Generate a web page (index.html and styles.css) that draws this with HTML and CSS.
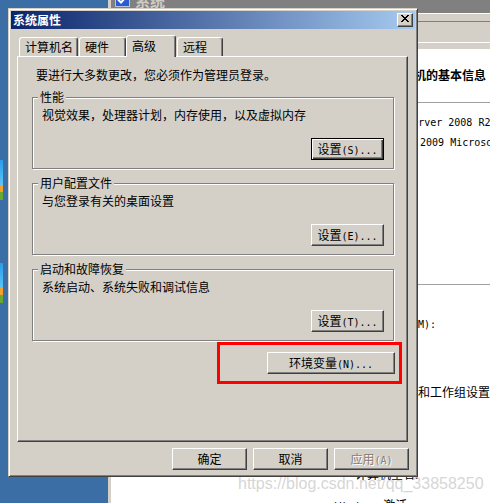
FILE: index.html
```html
<!DOCTYPE html>
<html lang="zh-CN">
<head>
<meta charset="utf-8">
<title>系统属性</title>
<link rel="stylesheet" href="styles.css">
</head>
<body>
<div class="desktop">
  <div class="deskicon icon1"></div>
  <div class="deskicon icon2"></div>

  <div class="bgwin">
    <div class="bg-title">
      <svg class="bg-icon" width="15" height="15" viewBox="0 0 15 15"><rect x="0.5" y="0.5" width="14" height="14" fill="#2a5bd0" stroke="#b8c4dc"/><path d="M3 7.5 L6 10.5 L12 4" fill="none" stroke="#fff" stroke-width="2"/></svg>
      <span class="bg-title-text">系统</span>
    </div>
    <div class="bg-menubar"></div>
    <div class="bg-toolbar"></div>
    <div class="bg-content">
      <div class="bg-heading">查看有关计算机的基本信息</div>
      <div class="bg-rule"></div>
      <div class="bg-line bg-os mono">Windows Server 2008 R2 Enterprise</div>
      <div class="bg-line bg-copy mono">© 2009 Microsoft Corporation</div>
      <div class="bg-rule bg-rule2"></div>
      <div class="bg-line bg-ram mono">(RAM):</div>
      <div class="bg-line bg-domain">计算机名称、域和工作组设置</div>
      <div class="bg-line bg-fullname">计算机全名:</div>
      <div class="bg-line bg-activate"><span class="mono">Windows </span>激活</div>
    </div>
  </div>

  <div class="dialog">
    <div class="titlebar">
      <span class="title-text">系统属性</span>
      <button class="close-btn" aria-label="关闭">
        <svg width="8" height="7" viewBox="0 0 8 7" shape-rendering="crispEdges"><path d="M0 0h2v1h-2zM6 0h2v1h-2zM1 1h2v1h-2zM5 1h2v1h-2zM2 2h4v1h-4zM3 3h2v1h-2zM2 4h4v1h-4zM1 5h2v1h-2zM5 5h2v1h-2zM0 6h2v1h-2zM6 6h2v1h-2z" fill="#000"/></svg>
      </button>
    </div>

    <div class="tabs">
      <div class="tab tab-name">计算机名</div>
      <div class="tab tab-hw">硬件</div>
      <div class="tab tab-adv selected">高级</div>
      <div class="tab tab-remote">远程</div>
    </div>

    <div class="panel">
      <div class="intro">要进行大多数更改，您必须作为管理员登录。</div>

      <div class="group">
        <span class="group-label">性能</span>
        <div class="group-text">视觉效果，处理器计划，内存使用，以及虚拟内存</div>
        <button class="btn btn-set default">设置<span class="mono">(S)...</span></button>
      </div>

      <div class="group">
        <span class="group-label">用户配置文件</span>
        <div class="group-text">与您登录有关的桌面设置</div>
        <button class="btn btn-set">设置<span class="mono">(E)...</span></button>
      </div>

      <div class="group">
        <span class="group-label">启动和故障恢复</span>
        <div class="group-text">系统启动、系统失败和调试信息</div>
        <button class="btn btn-set">设置<span class="mono">(T)...</span></button>
      </div>

      <div class="env-row">
        <button class="btn btn-env">环境变量<span class="mono">(N)...</span></button>
      </div>
    </div>

    <div class="dialog-buttons">
      <button class="btn btn-main">确定</button>
      <button class="btn btn-main">取消</button>
      <button class="btn btn-main disabled">应用<span class="mono">(A)</span></button>
    </div>
  </div>

  <div class="highlight"></div>
  <div class="watermark">https://blog.csdn.net/qq_33858250</div>
</div>
</body>
</html>
```
FILE: styles.css
```css
* {
  box-sizing: border-box;
  margin: 0;
  padding: 0;
}

html, body {
  width: 490px;
  height: 503px;
  overflow: hidden;
}

body {
  background: #3a6ea5;
  font-family: "Noto Sans CJK SC", sans-serif;
  font-size: 12px;
  color: #000;
}

.mono {
  font-family: "DejaVu Sans Mono", monospace;
  font-size: 10px;
}

.desktop {
  position: relative;
  width: 490px;
  height: 503px;
  overflow: hidden;
}

/* desktop icon fragments on the left edge */
.deskicon {
  position: absolute;
  left: 0;
  width: 3px;
  height: 40px;
  background: linear-gradient(to bottom, #2b9be8 0, #5cc4f8 62%, #f2a22c 62%, #f2a22c 80%, #6ba833 80%, #6ba833 100%);
}
.icon1 { top: 160px; }
.icon2 { top: 263px; }

/* background window */
.bgwin {
  position: absolute;
  left: 108px;
  top: 0;
  right: 0;
  bottom: 0;
  background: #fff;
  border-left: 3px solid #d4d0c8;
  display: flex;
  flex-direction: column;
  overflow: hidden;
}

.bg-title {
  height: 13px;
  flex: none;
  background: #808080;
  display: flex;
  align-items: flex-start;
  gap: 5px;
  padding-left: 4px;
  overflow: hidden;
}
.bg-icon {
  flex: none;
  margin-top: -8px;
}
.bg-title-text {
  margin-top: -7px;
  font-size: 15px;
  font-weight: bold;
  line-height: 15px;
  color: #d0ccc4;
}

.bg-menubar {
  height: 9px;
  flex: none;
  background: #d4d0c8;
  border-top: 1px solid #fff;
  border-bottom: 1px solid #808080;
}

.bg-toolbar {
  height: 27px;
  flex: none;
  background: linear-gradient(to bottom, #d4d0c8 0, #d4d0c8 20px, #fff 20px, #fff 21px, #d4d0c8 21px);
}

.bg-content {
  flex: 1;
  display: flex;
  flex-direction: column;
  white-space: nowrap;
  line-height: 14px;
}
.bg-heading {
  margin: 19px 0 0 231px;
  font-weight: bold;
}
.bg-rule {
  height: 1px;
  background: #a0a0a0;
  margin: 20px 0 0 231px;
}
.bg-rule2 { margin-top: 134px; }
.bg-os { margin: 13px 0 0 247px; line-height: 14px; }
.bg-copy { margin: 6px 0 0 297px; line-height: 14px; }
.bg-ram { margin: 33px 0 0 289px; line-height: 14px; }
.bg-domain { margin: 53px 0 0 223px; }
.bg-fullname { margin: 68px 0 0 244px; }
.bg-activate { margin: 17px 0 0 224px; }

/* dialog */
.dialog {
  position: absolute;
  left: 8px;
  top: 8px;
  width: 410px;
  height: 469px;
  z-index: 2;
  background: #d4d0c8;
  border: 1px solid;
  border-color: #d4d0c8 #404040 #404040 #d4d0c8;
  box-shadow: inset 1px 1px #fff, inset -1px -1px #808080;
  padding: 2px;
  display: flex;
  flex-direction: column;
}

.titlebar {
  height: 18px;
  flex: none;
  background: linear-gradient(to right, #0a246a, #a6caf0);
  display: flex;
  align-items: center;
  justify-content: space-between;
  padding: 0 2px;
}
.title-text {
  color: #fff;
  font-weight: bold;
  line-height: 18px;
}
.close-btn {
  width: 16px;
  height: 14px;
  background: #d4d0c8;
  border: 1px solid;
  border-color: #fff #404040 #404040 #fff;
  box-shadow: inset -1px -1px #808080;
  display: flex;
  justify-content: center;
  align-items: flex-start;
  padding-top: 1px;
}
.close-btn svg { display: block; }

/* tabs */
.tabs {
  height: 21px;
  flex: none;
  margin-top: 6px;
  padding-left: 8px;
  display: flex;
  align-items: flex-end;
  position: relative;
  z-index: 1;
}
.tab {
  height: 19px;
  padding-left: 5px;
  line-height: 17px;
  white-space: nowrap;
  border: 1px solid;
  border-bottom: none;
  border-color: #fff #404040 transparent #fff;
  box-shadow: inset -1px 0 #808080;
  border-radius: 3px 3px 0 0;
  background: #d4d0c8;
}
.tab-name { width: 59px; }
.tab-hw { width: 47px; margin-left: 1px; }
.tab-adv { width: 50px; }
.tab-remote { width: 46px; margin-left: 1px; }
.tab.selected {
  height: 22px;
  margin-bottom: -1px;
  padding-top: 1px;
}

/* tab panel */
.panel {
  height: 386px;
  flex: none;
  margin: 0 7px 0 6px;
  border: 1px solid;
  border-color: #fff #404040 #404040 #fff;
  box-shadow: inset -1px -1px #808080;
  padding: 11px 13px 0 14px;
  display: flex;
  flex-direction: column;
}
.intro {
  padding-left: 4px;
  line-height: 14px;
  white-space: nowrap;
}

.group {
  position: relative;
  height: 72px;
  margin-top: 14px;
  border: 1px solid #808080;
  box-shadow: inset 1px 1px #fff, 1px 1px #fff;
  padding: 10px 9px 8px 9px;
  display: flex;
  flex-direction: column;
}
.intro + .group { margin-top: 15px; }
.group-label {
  position: absolute;
  top: -8px;
  left: 5px;
  padding: 0 2px;
  background: #d4d0c8;
  line-height: 14px;
  white-space: nowrap;
}
.group-text {
  line-height: 14px;
  white-space: nowrap;
}

/* buttons */
.btn {
  height: 22px;
  background: #d4d0c8;
  border: 1px solid;
  border-color: #fff #404040 #404040 #fff;
  box-shadow: inset -1px -1px #808080;
  font-family: inherit;
  font-size: 12px;
  line-height: 20px;
  color: #000;
  text-align: center;
  white-space: nowrap;
}
.btn.default {
  border-color: #000;
  box-shadow: inset 1px 1px #fff, inset -1px -1px #404040, inset -2px -2px #808080;
}
.btn-set {
  width: 73px;
  align-self: flex-end;
  margin-top: 16px;
}
.env-row {
  margin-top: 11px;
  display: flex;
  justify-content: flex-end;
}
.btn-env {
  width: 128px;
  margin-right: -1px;
}

.dialog-buttons {
  margin-top: 6px;
  padding-right: 6px;
  display: flex;
  justify-content: flex-end;
  gap: 6px;
}
.btn-main { width: 75px; }
.btn.disabled {
  color: #808080;
  text-shadow: 1px 1px #fff;
}

/* annotation overlay */
.highlight {
  position: absolute;
  left: 217px;
  top: 342px;
  width: 185px;
  height: 42px;
  border: 3px solid #ff0000;
  z-index: 3;
}

.watermark {
  position: absolute;
  left: 238px;
  top: 475px;
  z-index: 4;
  font-family: "Liberation Sans", Arial, sans-serif;
  font-size: 16px;
  line-height: 18px;
  color: rgba(200, 200, 200, 0.75);
  white-space: nowrap;
}
```
